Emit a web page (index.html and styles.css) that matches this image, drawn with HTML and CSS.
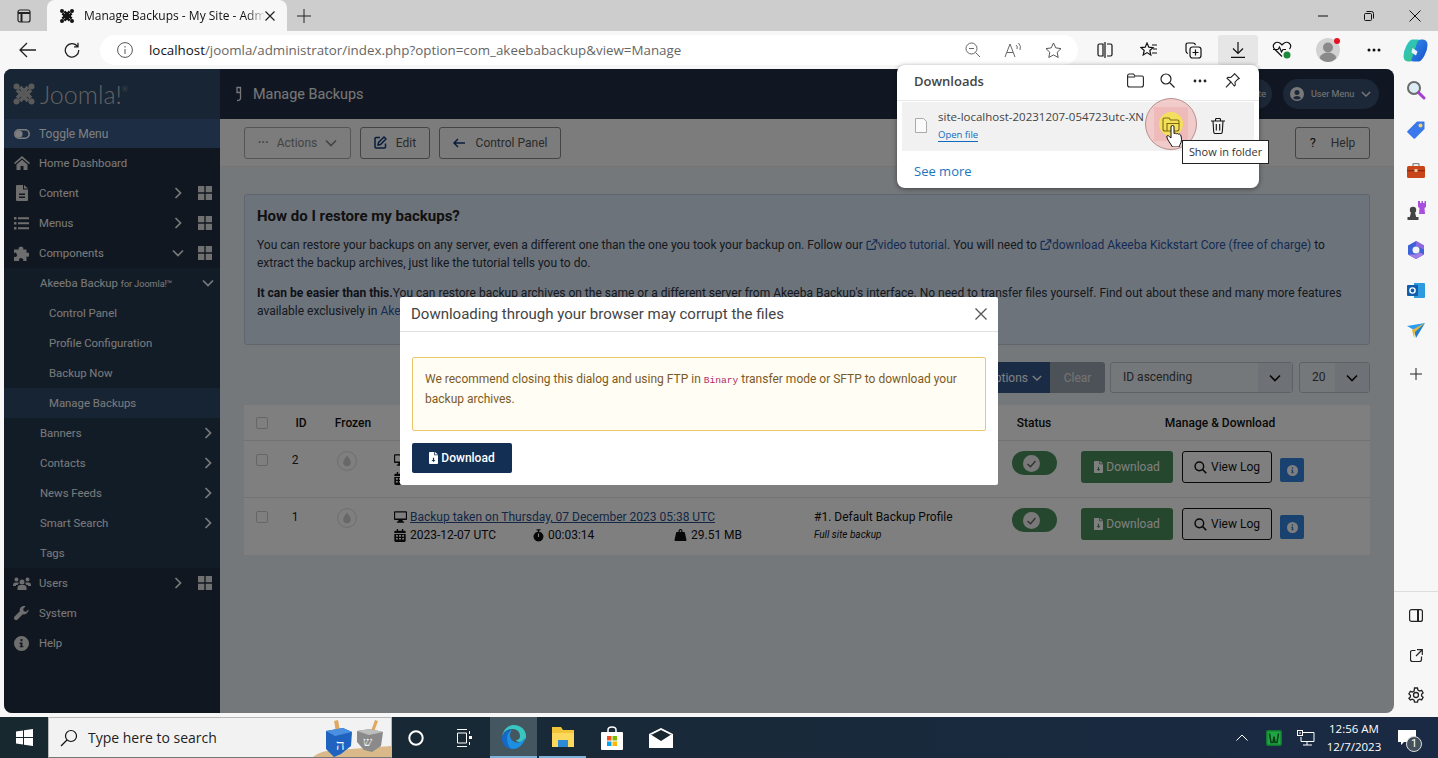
FILE: index.html
```html
<!DOCTYPE html>
<html lang="en">
<head>
    <meta charset="UTF-8">
    <title>Manage Backups - My Site - Administration</title>
    <link rel="stylesheet" href="styles.css">
</head>
<body>
    <svg class="defs" width="0" height="0">
        <defs>
            <linearGradient id="cop-a" x1="0" y1="0" x2="1" y2="1"><stop offset="0" stop-color="#27c4d8"/><stop offset="1" stop-color="#3fc46f"/></linearGradient>
            <linearGradient id="cop-b" x1="0" y1="0" x2="1" y2="1"><stop offset="0" stop-color="#2f8ff0"/><stop offset="1" stop-color="#1a4fc8"/></linearGradient>
        </defs>
        <symbol id="joomla" viewBox="0 0 24 24">
            <g fill="none" stroke="currentColor" stroke-width="3.6">
                <path d="M5 8l5 5 3 3 3 3"/><path d="M8 5l3 3 3 3 5 5"/>
                <path d="M19 8l-5 5-3 3-3 3"/><path d="M16 5l-3 3-3 3-5 5"/>
            </g>
            <g fill="currentColor"><circle cx="4.5" cy="4.5" r="3"/><circle cx="19.5" cy="4.5" r="3"/><circle cx="4.5" cy="19.5" r="3"/><circle cx="19.5" cy="19.5" r="3"/></g>
        </symbol>
        <symbol id="chev-r" viewBox="0 0 12 12"><path d="M3.5 1l5 5-5 5" fill="none" stroke="currentColor" stroke-width="1.7"/></symbol>
        <symbol id="chev-d" viewBox="0 0 12 12"><path d="M1 3.5l5 5 5-5" fill="none" stroke="currentColor" stroke-width="1.7"/></symbol>
        <symbol id="grid" viewBox="0 0 14 14"><path fill="currentColor" d="M0 0h6.3v6.3H0zM7.7 0H14v6.3H7.7zM0 7.7h6.3V14H0zM7.7 7.7H14V14H7.7z"/></symbol>
        <symbol id="file-dl" viewBox="0 0 12 16"><path fill="currentColor" fill-rule="evenodd" d="M0 1.2Q0 0 1.2 0H7v4.2h5v10.6q0 1.2-1.2 1.2H1.2Q0 16 0 14.8zM8 0l4 3.2H8zM5.2 7.5v3H3.4L6 13.2l2.6-2.7H6.8v-3z"/></symbol>
        <symbol id="search" viewBox="0 0 16 16"><circle cx="6.6" cy="6.6" r="5.3" fill="none" stroke="currentColor" stroke-width="1.8"/><path d="M10.5 10.5l4.6 4.6" stroke="currentColor" stroke-width="2"/></symbol>
        <symbol id="info" viewBox="0 0 16 16"><path fill="currentColor" fill-rule="evenodd" d="M8 0a8 8 0 1 1 0 16A8 8 0 0 1 8 0zM7 3.3v2.2h2V3.3zM6 7v1.4h1v2.4H6V12h4v-1.2H9V7z"/></symbol>
        <symbol id="desktop" viewBox="0 0 16 14"><path fill="currentColor" fill-rule="evenodd" d="M1 0h14q1 0 1 1v8.8q0 1-1 1h-4.5l.5 1.7h1.5V14H3.500v-1.500H5l.5-1.700H1q-1 0-1-1V1q0-1 1-1zm.4 1.400v7.500h13.200V1.400z"/></symbol>
        <symbol id="calendar" viewBox="0 0 14 16"><path fill="currentColor" fill-rule="evenodd" d="M3 0h1.700v2h4.600V0H11v2h1.600Q14 2 14 3.400V5H0V3.400Q0 2 1.400 2H3zM0 6h14v8.600q0 1.400-1.400 1.400H1.400Q0 16 0 14.600zm2 1.500v2h2.300v-2zm3.800 0v2h2.400v-2zm3.900 0v2H12v-2zM2 11v2h2.300v-2zm3.800 0v2h2.400v-2zm3.900 0v2H12v-2z"/></symbol>
        <symbol id="watch" viewBox="0 0 14 16"><path fill="currentColor" fill-rule="evenodd" d="M4.500 0h5v1.500H7.800v1.600a6.300 6.300 0 1 1-1.600 0V1.500H4.500zM6.300 5.500v4.300h1.400V5.500z"/></symbol>
        <symbol id="weight" viewBox="0 0 16 16"><path fill="currentColor" fill-rule="evenodd" d="M8 0a2.800 2.800 0 0 1 2.500 4h2.300q.8 0 1 .7L16 14.500q.2 1.500-1.300 1.500H1.300Q-.2 16 0 14.500L2.200 4.700q.2-.7 1-.7h2.300A2.800 2.800 0 0 1 8 0zm0 1.600a1.200 1.200 0 1 0 0 2.400 1.200 1.200 0 0 0 0-2.400z"/></symbol>
        <symbol id="drop" viewBox="0 0 20 20"><circle cx="10" cy="10" r="9.400" fill="none" stroke="currentColor" stroke-width=".8"/><path fill="currentColor" d="M10 4.500c2 3 3.800 4.800 3.800 7a3.800 3.800 0 0 1-7.600 0c0-2.200 1.800-4 3.800-7z"/></symbol>
        <symbol id="ext" viewBox="0 0 12 12"><path fill="none" stroke="currentColor" stroke-width="1.300" d="M9.500 7v3.300q0 1-1 1H1.700q-1 0-1-1V3.500q0-1 1-1H5M7 .8h4.200V5M11 1L5 7"/></symbol>
    </svg>

    <div class="tabbar">
        <div class="tab-side"><svg width="16" height="16" viewBox="0 0 16 16" fill="none" stroke="#222" stroke-width="1.200"><rect x="2" y="2" width="12" height="12" rx="2"/><path d="M2 5h12M5.500 5v9" stroke-width="2"/></svg></div>
        <div class="tab">
            <svg class="tab-icon" width="16" height="16"><use href="#joomla"/></svg>
            <span class="tab-title">Manage Backups - My Site - Adm</span>
            <svg class="tab-close" width="10" height="10" viewBox="0 0 10 10"><path d="M.5.500l9 9m0-9l-9 9" stroke="#222" stroke-width="1.200"/></svg>
        </div>
        <div class="tab-new"><svg width="14" height="14" viewBox="0 0 14 14"><path d="M7 0v14M0 7h14" stroke="#222"/></svg></div>
        <div class="win-ctrls">
            <span class="win-btn"><svg width="10" height="10" viewBox="0 0 10 10"><path d="M0 5h10" stroke="#111"/></svg></span>
            <span class="win-btn"><svg width="10" height="10" viewBox="0 0 10 10" fill="none" stroke="#111"><rect x=".5" y="2.500" width="7" height="7" rx="1"/><path d="M2.500.5h5q2 0 2 2v5"/></svg></span>
            <span class="win-btn"><svg width="12" height="12" viewBox="0 0 12 12"><path d="M.5.500l11 11m0-11l-11 11" stroke="#111"/></svg></span>
        </div>
    </div>

    <div class="toolbar">
        <span class="tool nav"><svg width="18" height="16" viewBox="0 0 18 16" fill="none" stroke="#222" stroke-width="1.300"><path d="M1 8h16M8 1L1 8l7 7"/></svg></span>
        <span class="tool nav2"><svg width="16" height="16" viewBox="0 0 16 16" fill="none" stroke="#222" stroke-width="1.300"><path d="M13.500 4.500A6.700 6.700 0 1 0 14.700 8M14 .8v4h-4"/></svg></span>
        <div class="address">
            <span class="addr-info"><svg width="16" height="16" viewBox="0 0 16 16" fill="none" stroke="#555"><circle cx="8" cy="8" r="7.400"/><path d="M8 7v5M8 4v1.500"/></svg></span>
            <span class="url"><b>localhost</b>/joomla/administrator/index.php?option=com_akeebabackup&amp;view=Manage</span>
            <span class="addr-tools">
                <span class="addr-tool"><svg width="16" height="16" viewBox="0 0 16 16" fill="none" stroke="#666"><circle cx="6.500" cy="6.500" r="5.500"/><path d="M10.500 10.500L15 15M4 6.500h5"/></svg></span>
                <span class="addr-tool"><svg width="18" height="16" viewBox="0 0 18 16" fill="none" stroke="#666"><path d="M1 15L6 2l5 13M3 10.500h6M12 3q2 1.500 1 4M14.500 1q3 3 1.500 7"/></svg></span>
                <span class="addr-tool"><svg width="17" height="16" viewBox="0 0 17 16" fill="none" stroke="#555"><path d="M8.500 1l2.300 4.900 5.200.7-3.800 3.700 1 5.200-4.700-2.600-4.700 2.600 1-5.200L1 6.600l5.200-.7z"/></svg></span>
            </span>
        </div>
        <span class="tool side-first"><svg width="16" height="16" viewBox="0 0 16 16" fill="none" stroke="#111" stroke-width="1.200"><path d="M6 2H2.500Q1 2 1 3.500v9Q1 14 2.500 14H6zM10 2h3.500Q15 2 15 3.500v9q0 1.500-1.500 1.500H10M8 0v16"/></svg></span>
        <span class="tool"><svg width="18" height="16" viewBox="0 0 18 16" fill="none" stroke="#111" stroke-width="1.200"><path d="M7 1l1.800 4.200 4.200.4-3.200 2.900 1 4.400L7 10.600l-3.800 2.300 1-4.400L1 5.600l4.200-.4zM12 3h5M13 7h4M12 11h5"/></svg></span>
        <span class="tool"><svg width="17" height="17" viewBox="0 0 17 17" fill="none" stroke="#111" stroke-width="1.200"><path d="M3 11.500Q1 11 1 9V3q0-2 2-2h5q2 0 2.500 2"/><rect x="5" y="5" width="11" height="11" rx="2.500"/><path d="M10.500 7.500v6M7.500 10.500h6"/></svg></span>
        <span class="tool tool-dl"><svg width="14" height="16" viewBox="0 0 14 16" fill="none" stroke="#111" stroke-width="1.200"><path d="M7 0v11M2 6.500L7 11.500l5-5M0 15.300h14"/></svg></span>
        <span class="tool tool-gap"><svg width="20" height="18" viewBox="0 0 20 18" fill="none" stroke="#111" stroke-width="1.200"><path d="M10 15.500L2.500 8Q0 5 2.500 2.500t6 0L10 4l1.500-1.500q3.500-2.500 6 0t0 5.500M1 8.500h5l1.500-2.500 2 5 1.500-2.500h3"/><circle cx="15" cy="14" r="3.500" fill="#1c8a3a" stroke="none"/></svg></span>
        <span class="tool tool-gap"><span class="avatar"><svg width="24" height="24" viewBox="0 0 24 24"><circle cx="12" cy="12" r="12" fill="#d2d2d2"/><circle cx="12" cy="9.500" r="5" fill="#8a8a8a"/><path d="M3.500 20q2-5.500 8.500-5.500T20.500 20Q17 24 12 24t-8.500-4z" fill="#8a8a8a"/></svg><i class="avatar-dot"></i></span></span>
        <span class="tool tool-gap"><svg width="14" height="4" viewBox="0 0 14 4" fill="#111"><circle cx="2" cy="2" r="1.500"/><circle cx="7" cy="2" r="1.500"/><circle cx="12" cy="2" r="1.500"/></svg></span>
        <span class="tool tool-copilot"><svg width="25" height="25" viewBox="0 0 25 25"><path d="M9 1.500h6q2 0 1.500 2L11 20q-1 3.500-4 3.500H5Q.5 23 .5 18q0-5 3-10.500T9 1.500z" fill="url(#cop-a)"/><path d="M16 23.500h-6q-2 0-1.500-2L14 5q1-3.500 4-3.500h2q4.500.5 4.500 5.500 0 5-3 10.500T16 23.500z" fill="url(#cop-b)"/><path d="M9.500 10l5 3.500-1.500 4-4.500-3z" fill="#e8f2ff"/></svg></span>
    </div>

    <div class="main">
        <div class="site">
            <aside class="sidebar">
                <div class="logo"><svg class="logo-mark" width="24" height="24"><use href="#joomla"/></svg><span class="logo-text">Joomla!<sup>®</sup></span></div>
                <div class="menu-toggle"><svg width="16" height="10" viewBox="0 0 16 10"><rect x=".8" y=".8" width="14.400" height="8.400" rx="4.200" fill="none" stroke="currentColor" stroke-width="1.600"/><circle cx="5" cy="5" r="3.600" fill="currentColor"/></svg><span>Toggle Menu</span></div>
                <nav class="menu">
                    <div class="m-item"><span class="m-icon"><svg width="16" height="14" viewBox="0 0 16 14"><path fill="currentColor" d="M8 0l8 7-1 1.200L8 2.300 1 8.200 0 7zM2.500 8.500L8 3.800l5.500 4.700V14H9.500v-4h-3v4h-4z"/></svg></span><span class="m-label">Home Dashboard</span></div>
                    <div class="m-item"><span class="m-icon"><svg width="12" height="16" viewBox="0 0 12 16"><path fill="currentColor" fill-rule="evenodd" d="M1 0h6v4.500h5V15q0 1-1 1H1q-1 0-1-1V1q0-1 1-1zM8 0l4 3.500H8zM3 8.500V10h6V8.500zM3 11.500V13h6v-1.500z"/></svg></span><span class="m-label">Content</span><svg class="m-chev" width="12" height="12"><use href="#chev-r"/></svg><svg class="m-grid" width="14" height="14"><use href="#grid"/></svg></div>
                    <div class="m-item"><span class="m-icon"><svg width="15" height="13" viewBox="0 0 15 13"><path fill="currentColor" d="M0 0h2.500v2.500H0zM4 .3h11v2H4zM0 5h2.500v2.500H0zM4 5.300h11v2H4zM0 10h2.500v2.500H0zM4 10.300h11v2H4z"/></svg></span><span class="m-label">Menus</span><svg class="m-chev" width="12" height="12"><use href="#chev-r"/></svg><svg class="m-grid" width="14" height="14"><use href="#grid"/></svg></div>
                    <div class="m-item"><span class="m-icon"><svg width="15" height="15" viewBox="0 0 15 15"><path fill="currentColor" d="M5 3.500Q4 2 5.500 1t3 0q1.500 1 .5 2.500h3.500V7q1.500-1 2.500 0t0 3-2.500 0V15H9q1-1.500-.5-2.500t-3 0q-1 1 0 2.500H0V10.500q1.500 1 2.500 0t0-3-2.500 0V3.500z"/></svg></span><span class="m-label">Components</span><svg class="m-chev" width="12" height="12"><use href="#chev-d"/></svg><svg class="m-grid" width="14" height="14"><use href="#grid"/></svg></div>
                    <div class="m-sub">
                        <div class="m-item m-l2"><span class="m-label">Akeeba Backup <small>for Joomla!™</small></span><svg class="m-chev2" width="12" height="12"><use href="#chev-d"/></svg></div>
                        <div class="m-item m-l3"><span class="m-label">Control Panel</span></div>
                        <div class="m-item m-l3"><span class="m-label">Profile Configuration</span></div>
                        <div class="m-item m-l3"><span class="m-label">Backup Now</span></div>
                        <div class="m-item m-l3 m-active"><span class="m-label">Manage Backups</span></div>
                        <div class="m-item m-l2"><span class="m-label">Banners</span><svg class="m-chev2" width="12" height="12"><use href="#chev-r"/></svg></div>
                        <div class="m-item m-l2"><span class="m-label">Contacts</span><svg class="m-chev2" width="12" height="12"><use href="#chev-r"/></svg></div>
                        <div class="m-item m-l2"><span class="m-label">News Feeds</span><svg class="m-chev2" width="12" height="12"><use href="#chev-r"/></svg></div>
                        <div class="m-item m-l2"><span class="m-label">Smart Search</span><svg class="m-chev2" width="12" height="12"><use href="#chev-r"/></svg></div>
                        <div class="m-item m-l2"><span class="m-label">Tags</span></div>
                    </div>
                    <div class="m-item"><span class="m-icon"><svg width="18" height="14" viewBox="0 0 18 14"><path fill="currentColor" d="M9 3.500a2.500 2.500 0 1 1 0 5 2.500 2.500 0 0 1 0-5zM3.500 1.500a2 2 0 1 1 0 4 2 2 0 0 1 0-4zM14.500 1.500a2 2 0 1 1 0 4 2 2 0 0 1 0-4zM4.500 14v-2q0-3 3-3h3q3 0 3 3v2zM0 9.500Q0 6.500 2.500 6.500H5q.5 0 1 .5-1 1-1.500 2H3v1H0zM18 9.500q0-3-2.500-3H13q-.5 0-1 .5 1 1 1.500 2H15v1h3z"/></svg></span><span class="m-label">Users</span><svg class="m-chev" width="12" height="12"><use href="#chev-r"/></svg><svg class="m-grid" width="14" height="14"><use href="#grid"/></svg></div>
                    <div class="m-item"><span class="m-icon"><svg width="15" height="15" viewBox="0 0 15 15"><path fill="currentColor" d="M14.700 3.300L12.200 5.800l-2.500-.5-.5-2.500L11.700.3q-3-1-4.900 1-1.500 1.500-1 4L.6 10.500q-1.300 1.500 0 3 1.500 1.300 3 0l5.200-5.200q2.500.5 4-1 2-2 1.900-4z"/></svg></span><span class="m-label">System</span></div>
                    <div class="m-item"><span class="m-icon"><svg width="15" height="15"><use href="#info"/></svg></span><span class="m-label">Help</span></div>
                </nav>
            </aside>

            <div class="content">
                <header class="top-head">
                    <span class="head-icon"><svg width="10" height="16" viewBox="0 0 10 16" fill="none" stroke="currentColor" stroke-width="1.300"><path d="M6.500 1.500H3v5h3.500zM6.500 1.500v10.500q0 2.500-3.500 2.500"/></svg></span>
                    <span class="head-title">Manage Backups</span>
                    <span class="head-right">
                        <svg class="head-j" width="10" height="10"><use href="#joomla"/></svg>
                        <span class="pill pill-site">Visit Site</span>
                        <span class="pill pill-user"><svg width="14" height="14" viewBox="0 0 14 14"><path fill="currentColor" fill-rule="evenodd" d="M7 0a7 7 0 1 1 0 14A7 7 0 0 1 7 0zm0 3a2.500 2.500 0 1 0 0 5 2.500 2.500 0 0 0 0-5zM3 11q1.500 1.500 4 1.500t4-1.500Q10 9 7 9t-4 2z"/></svg><span class="pill-text">User Menu</span><svg width="10" height="10"><use href="#chev-d"/></svg></span>
                    </span>
                </header>

                <div class="subhead">
                    <button class="btn btn-muted"><span class="dots">···</span>Actions<svg width="12" height="12"><use href="#chev-d"/></svg></button>
                    <button class="btn btn-line btn-edit"><svg width="13" height="13" viewBox="0 0 13 13" fill="none" stroke="#0d3a7a" stroke-width="1.500"><path d="M11.500 7.500v3.500q0 1-1 1H2q-1 0-1-1V2.500q0-1 1-1h4M4.500 6.500L10 1l2 2-5.500 5.500-2.500.5z"/></svg>Edit</button>
                    <button class="btn btn-line btn-cp"><svg width="12" height="10" viewBox="0 0 12 10" fill="none" stroke="#0d3a7a" stroke-width="1.500"><path d="M12 5H1M5 1L1 5l4 4"/></svg>Control Panel</button>
                    <button class="btn btn-line btn-help"><b>?</b>Help</button>
                </div>

                <div class="page-body">
                    <section class="restore-box">
                        <h4>How do I restore my backups?</h4>
                        <p>You can restore your backups on any server, even a different one than the one you took your backup on. Follow our <a><svg width="12" height="11"><use href="#ext"/></svg>video tutorial</a>. You will need to <a><svg width="12" height="11"><use href="#ext"/></svg>download Akeeba Kickstart Core (free of charge)</a> to extract the backup archives, just like the tutorial tells you to do.</p>
                        <p><strong>It can be easier than this.</strong>You can restore backup archives on the same or a different server from Akeeba Backup's interface. No need to transfer files yourself. Find out about these and many more features available exclusively in <a>Akeeba Backup Professional</a>.</p>
                    </section>

                    <div class="filters">
                        <span class="btn-group"><span class="f-opts">Filter Options<svg width="10" height="10"><use href="#chev-d"/></svg></span><span class="f-clear">Clear</span></span>
                        <span class="select select-order">ID ascending<i class="select-arrow"><svg width="12" height="12"><use href="#chev-d"/></svg></i></span>
                        <span class="select select-limit">20<i class="select-arrow"><svg width="12" height="12"><use href="#chev-d"/></svg></i></span>
                    </div>

                    <div class="tbl">
                        <div class="tbl-row tbl-head">
                            <span class="c-center"><i class="check"></i></span>
                            <span class="c-center">ID</span>
                            <span class="c-center">Frozen</span>
                            <span></span>
                            <span></span>
                            <span class="c-center">Status</span>
                            <span class="c-center">Manage &amp; Download</span>
                        </div>
                        <div class="tbl-row">
                            <span class="c-center"><i class="check"></i></span>
                            <span class="c-center c-id">2</span>
                            <span class="c-center"><svg class="frozen" width="20" height="20"><use href="#drop"/></svg></span>
                            <div class="c-desc">
                                <div class="b-title"><svg width="13" height="12"><use href="#desktop"/></svg></div>
                                <div class="b-meta"><span><svg width="12" height="13"><use href="#calendar"/></svg></span></div>
                            </div>
                            <div class="c-profile"></div>
                            <span class="c-center"><i class="toggle"><svg width="19" height="19" viewBox="0 0 19 19"><circle cx="9.500" cy="9.500" r="8.500" fill="#f2f2f2"/><path d="M5.500 10l3 2.800 5-5.800" fill="none" stroke="#666" stroke-width="1.400"/></svg></i></span>
                            <div class="c-manage"><span class="btn-green"><svg width="9" height="12"><use href="#file-dl"/></svg>Download</span><span class="btn-log"><svg width="13" height="13"><use href="#search"/></svg>View Log</span><span class="btn-info"><svg width="11" height="11"><use href="#info"/></svg></span></div>
                        </div>
                        <div class="tbl-row">
                            <span class="c-center"><i class="check"></i></span>
                            <span class="c-center c-id">1</span>
                            <span class="c-center"><svg class="frozen" width="20" height="20"><use href="#drop"/></svg></span>
                            <div class="c-desc">
                                <div class="b-title"><svg width="13" height="12"><use href="#desktop"/></svg><a>Backup taken on Thursday, 07 December 2023 05:38 UTC</a></div>
                                <div class="b-meta"><span><svg width="12" height="13"><use href="#calendar"/></svg>2023-12-07 UTC</span><span><svg width="11" height="13"><use href="#watch"/></svg>00:03:14</span><span><svg width="13" height="12"><use href="#weight"/></svg>29.51 MB</span></div>
                            </div>
                            <div class="c-profile">#1. Default Backup Profile<em>Full site backup</em></div>
                            <span class="c-center"><i class="toggle"><svg width="19" height="19" viewBox="0 0 19 19"><circle cx="9.500" cy="9.500" r="8.500" fill="#f2f2f2"/><path d="M5.500 10l3 2.800 5-5.800" fill="none" stroke="#666" stroke-width="1.400"/></svg></i></span>
                            <div class="c-manage"><span class="btn-green"><svg width="9" height="12"><use href="#file-dl"/></svg>Download</span><span class="btn-log"><svg width="13" height="13"><use href="#search"/></svg>View Log</span><span class="btn-info"><svg width="11" height="11"><use href="#info"/></svg></span></div>
                        </div>
                    </div>
                </div>
            </div>

            <div class="backdrop"></div>
            <div class="modal">
                <div class="modal-head"><span>Downloading through your browser may corrupt the files</span><svg width="12" height="12" viewBox="0 0 12 12"><path d="M.5.500l11 11m0-11l-11 11" stroke="#555" stroke-width="1.300"/></svg></div>
                <div class="modal-body">
                    <div class="alert">We recommend closing this dialog and using FTP in <code>Binary</code> transfer mode or SFTP to download your backup archives.</div>
                    <span class="btn-dl"><svg width="9" height="12"><use href="#file-dl"/></svg>Download</span>
                </div>
            </div>
        </div>

        <aside class="edgebar">
            <span class="edge-item"><svg width="20" height="20" viewBox="0 0 20 20"><circle cx="8" cy="8" r="6" fill="#dcecf5" stroke="#6a6a6a" stroke-width="2"/><path d="M12.500 12.500L18 18" stroke="#a53fcf" stroke-width="3" stroke-linecap="round"/></svg></span>
            <span class="edge-item"><svg width="18" height="18" viewBox="0 0 18 18"><path d="M10 .5h7q.5 0 .5.500v7L8 17.500q-.7.7-1.400 0L.5 11.400q-.7-.7 0-1.400z" fill="#3a78ec"/><circle cx="13.500" cy="4.500" r="2" fill="#f3d36a"/></svg></span>
            <span class="edge-item"><svg width="18" height="15" viewBox="0 0 18 15"><path d="M6 3V1.500Q6 .5 7 .5h4q1 0 1 1V3" fill="none" stroke="#8a8a8a" stroke-width="1.300"/><rect y="3" width="18" height="12" rx="1.500" fill="#c8451a"/><rect y="7" width="18" height="1.300" fill="#8f2d0e"/><rect x="7.500" y="6" width="3" height="3" fill="#f0c8a0"/></svg></span>
            <span class="edge-item"><svg width="19" height="19" viewBox="0 0 19 19"><circle cx="6" cy="9" r="3.200" fill="#444"/><path d="M4 11.500h4l1.200 4.500H2.800zM.5 16h11v3H.5z" fill="#444"/><path d="M11 0h2v2h1.500V0h1.500v2h1.500V0h1.500v6l-1.500 1 .5 6h-6l.5-6L11 6z" fill="#a84fe0"/></svg></span>
            <span class="edge-item"><svg width="18" height="18" viewBox="0 0 18 18"><path d="M9 0l8 4.500v9L9 18l-8-4.500v-9z" fill="#3d63d8"/><path d="M9 0l8 4.500v4L9 5z" fill="#8e6ae0"/><path d="M1 13.500l8 4.500 8-4.500-4-2-4 2z" fill="#a77de8"/><circle cx="9" cy="9" r="3.500" fill="#f4f4f4"/></svg></span>
            <span class="edge-item"><svg width="18" height="17" viewBox="0 0 18 17"><path d="M7 1h10q1 0 1 1v13q0 1-1 1H7z" fill="#2e9ae0"/><rect y="3" width="11" height="11" rx="1" fill="#0f5eae"/><circle cx="5.500" cy="8.500" r="2.600" fill="none" stroke="#fff" stroke-width="1.400"/></svg></span>
            <span class="edge-item"><svg width="18" height="15" viewBox="0 0 18 15"><path d="M0 3l18-3-11 7z" fill="#2a9df0"/><path d="M18 0L7 7l2 8z" fill="#1d7fd0"/><path d="M18 0L5 7l2 8 1-6z" fill="#e8b43a"/></svg></span>
            <span class="edge-item edge-plus"><svg width="12" height="12" viewBox="0 0 12 12"><path d="M6 0v12M0 6h12" stroke="#222"/></svg></span>
            <div class="edge-bottom">
                <span class="edge-item"><svg width="14" height="13" viewBox="0 0 14 13" fill="none" stroke="#222" stroke-width="1.200"><rect x=".6" y=".6" width="12.800" height="11.800" rx="2"/><path d="M9 .6v11.800" stroke-width="2"/></svg></span>
                <span class="edge-item"><svg width="13" height="13" viewBox="0 0 13 13" fill="none" stroke="#222" stroke-width="1.200"><path d="M5.500 1.500H2.500q-2 0-2 2v7q0 2 2 2h7q2 0 2-2V7.500M7 .7h5.300V6M12 1L6 7"/></svg></span>
                <span class="edge-item"><svg width="16" height="16" viewBox="0 0 16 16" fill="none" stroke="#222" stroke-width="1.300"><circle cx="8" cy="8" r="2.500"/><path d="M6.500 1h3l.4 2 1.800 1 1.900-.7 1.500 2.600-1.500 1.300v1.800l1.500 1.300-1.500 2.600-1.900-.7-1.800 1-.4 2h-3l-.4-2-1.800-1-1.900.7L.9 11.300l1.500-1.300V8.200L.9 6.900l1.500-2.600 1.900.7 1.800-1z"/></svg></span>
            </div>
        </aside>
    </div>

    <div class="taskbar">
        <span class="tb-start"><svg width="17" height="17" viewBox="0 0 17 17" fill="#fff"><path d="M0 2.500l7-1v6.500H0zM8 1.300L17 0v8H8zM0 9h7v6.500l-7-1zM8 9h9v8l-9-1.300z"/></svg></span>
        <div class="tb-search">
            <svg width="18" height="18" viewBox="0 0 18 18" fill="none" stroke="#111" stroke-width="1.200"><circle cx="11" cy="7" r="5.500"/><path d="M7 11l-6 6"/></svg>
            <span>Type here to search</span>
            <svg class="tb-doodle" width="78" height="39" viewBox="0 0 78 39">
                <path d="M0 39q8-7 24-7l54-4v11z" fill="#d9b98a"/>
                <path d="M21 3l4-1 2 11-4 1z" fill="#e0a85e"/>
                <path d="M13 13l17-3 9 4-1 14-10 8-7 3-8-8z" fill="#1f62c0"/>
                <path d="M13 13l17-3 9 4-17 4z" fill="#4a8fe0"/>
                <text x="23" y="32" font-size="15" font-family="Liberation Serif, serif" fill="#fff">ה</text>
                <path d="M62 2l3 1-4 11-3-1z" fill="#e0a85e"/>
                <path d="M44 13l13-2 13 3-2 14-9 6-8-2-7-8z" fill="#8a8a8a"/>
                <path d="M44 13l13-2 13 3-14 3z" fill="#bdbdbd"/>
                <text x="50" y="28" font-size="13" font-family="Liberation Serif, serif" fill="#eee">ש</text>
            </svg>
        </div>
        <span class="tb-item"><svg width="16" height="16" viewBox="0 0 16 16"><circle cx="8" cy="8" r="6.700" fill="none" stroke="#fff" stroke-width="2"/></svg></span>
        <span class="tb-item"><svg width="18" height="18" viewBox="0 0 18 18" fill="none" stroke="#fff"><path d="M2 .5h10M2 17.500h10M2.500 4h9v10h-9z"/><path d="M14.500 2v3M14.500 13v3"/><rect x="14" y="7" width="3" height="3" fill="#fff" stroke="none"/></svg></span>
        <span class="tb-app tb-edge"><svg width="24" height="24" viewBox="0 0 24 24"><path d="M12 0c7 0 12 5 12 11 0 4-3 6-6 6-2 0-4-1-4-2 3 0 4-2 4-4 0-4-3-7-7-7-6 0-11 4-11 10C0 6 5 0 12 0z" fill="#3ac6c0"/><path d="M0 14c0-6 5-10 10-10-4 2-5 5-5 9 0 6 5 11 11 11-2 0-4 0-6 0-6 0-10-5-10-10z" fill="#1568c8"/><path d="M5 13c0-4 2-7 5-8-1 1-2 3-2 5 0 5 5 9 10 7 2-1 3-2 5-4-1 6-6 11-12 11C7 24 5 18 5 13z" fill="#1d8fe0"/></svg></span>
        <span class="tb-app tb-open"><svg width="24" height="22" viewBox="0 0 24 22"><path d="M1 1h9l2 3h11v17H1z" fill="#f2c43a"/><path d="M1 7h22v14H1z" fill="#fbd95c"/><rect x="7" y="14" width="10" height="7" fill="#2c8bd4"/></svg></span>
        <span class="tb-app"><svg width="22" height="24" viewBox="0 0 22 24"><path d="M7 6V4q0-3 4-3t4 3v2" fill="none" stroke="#fff" stroke-width="1.500"/><rect y="6" width="22" height="18" rx="1" fill="#fff"/><path d="M6 10h4.500v4.500H6z" fill="#f25022"/><path d="M11.500 10H16v4.500h-4.500z" fill="#7fba00"/><path d="M6 15.500h4.500V20H6z" fill="#00a4ef"/><path d="M11.500 15.500H16V20h-4.500z" fill="#ffb900"/></svg></span>
        <span class="tb-app"><svg width="24" height="20" viewBox="0 0 24 20"><path d="M0 6l12-6 12 6v14H0z" fill="#fff"/><path d="M1 6l11 7 11-7-11 3z" fill="#17262f"/><path d="M3 6.500l9-4.500 9 4.500-9 5.500z" fill="#17262f"/></svg></span>
        <div class="tray">
            <span class="tray-item"><svg width="12" height="7" viewBox="0 0 12 7" fill="none" stroke="#fff"><path d="M.5 6.500L6 1l5.500 5.500"/></svg></span>
            <span class="tray-item"><svg width="16" height="16" viewBox="0 0 16 16"><rect width="16" height="16" rx="2" fill="#0f7a2e"/><rect x="1.500" y="1.500" width="13" height="13" fill="#1fa544"/><path d="M3.500 3.500l1.500 9h2l1-6 1 6h2l1.500-9" fill="none" stroke="#0a3d17" stroke-width="1.500"/></svg></span>
            <span class="tray-item"><svg width="18" height="16" viewBox="0 0 18 16" fill="none" stroke="#fff"><path d="M5 2.500h12v9H4V7M10 11.500V15M6 15h9"/><rect x=".5" y=".5" width="5" height="5" fill="#1a2a40"/><path d="M2 3h2" /></svg></span>
            <span class="clock"><span>12:56 AM</span><span>12/7/2023</span></span>
            <span class="notif"><svg width="18" height="16" viewBox="0 0 18 16" fill="#fff"><path d="M0 0h18v12H6l-3 3v-3H0z"/></svg><i class="notif-num">1</i></span>
        </div>
    </div>

    <div class="dl-panel">
        <div class="dl-head">
            <span class="dl-title">Downloads</span>
            <span class="dl-tool"><svg width="17" height="15" viewBox="0 0 17 15" fill="none" stroke="#222" stroke-width="1.100"><path d="M.6 3Q.6 1 2.500 1h4L8 3h7q1.400 0 1.400 1.500V12q0 2-2 2H2.600q-2 0-2-2zM.6 4h7.500"/></svg></span>
            <span class="dl-tool"><svg width="15" height="15" viewBox="0 0 15 15" fill="none" stroke="#222" stroke-width="1.200"><circle cx="6" cy="6" r="5"/><path d="M10 10l4.500 4.500"/></svg></span>
            <span class="dl-tool"><svg width="14" height="4" viewBox="0 0 14 4" fill="#222"><circle cx="2" cy="2" r="1.400"/><circle cx="7" cy="2" r="1.400"/><circle cx="12" cy="2" r="1.400"/></svg></span>
            <span class="dl-tool"><svg width="15" height="15" viewBox="0 0 15 15" fill="none" stroke="#222" stroke-width="1.100"><path d="M9.500.7l4.800 4.800-1.500.7-2.800 3 .3 2.800-1 1L6 9 1 14.300 6 9 2 5.200l1-1 2.800.3 3-2.800z"/></svg></span>
        </div>
        <div class="dl-row">
            <svg class="dl-file" width="12" height="15" viewBox="0 0 12 15" fill="#fafafa" stroke="#aaa"><path d="M.5.500h8l3 3v11H.5z"/></svg>
            <div class="dl-info">
                <span class="dl-name">site-localhost-20231207-054723utc-XN</span>
                <a class="dl-open">Open file</a>
            </div>
            <svg class="dl-trash" width="14" height="16" viewBox="0 0 14 16" fill="none" stroke="#111" stroke-width="1.100"><path d="M0 3h14M4.500 3V1.500q0-1 1-1h3q1 0 1 1V3M2 3l.7 11q.1 1.500 1.500 1.500h5.600q1.400 0 1.500-1.500L12 3M5.300 6v6.500M8.700 6v6.500"/></svg>
        </div>
        <a class="dl-more">See more</a>
    </div>

    <div class="spot">
        <i class="spot-square"></i>
        <i class="spot-yellow"></i>
        <svg class="spot-folder" width="18" height="15" viewBox="0 0 18 15" fill="none" stroke="#7a6a10" stroke-width="1.100"><path d="M1 2.500Q1 1 2.500 1H7l1.500 2h7Q17 3 17 4.500V12q0 2-2 2H3q-2 0-2-2zM5 14V6.500h12"/></svg>
        <svg class="spot-hand" width="17" height="22" viewBox="0 0 17 22"><path d="M5 2q0-1.500 1.500-1.500T8 2v6.500l1-.3q1-.2 1.500.5 1.300-.5 2 .5 1.400-.5 2.200.8.800 2 .8 4.500 0 3-1.500 5-.5 1.500-1 2.500H6.500L2 15 .8 12q-.3-1.300 1-1.300 1 0 1.700 1L5 13z" fill="#fff" stroke="#111"/></svg>
    </div>
    <div class="tooltip">Show in folder</div>
</body>
</html>
```

FILE: styles.css
```css
* {
    box-sizing: border-box;
}

html, body {
    margin: 0;
    height: 758px;
    overflow: hidden;
}

body {
    position: relative;
    font-family: Roboto, "Liberation Sans", sans-serif;
    font-size: 12px;
    background-color: #f7f7f7;
    color: #222;
}

.defs {
    position: absolute;
}

svg {
    display: block;
    flex: none;
}

/* browser chrome */
.tabbar {
    display: flex;
    align-items: stretch;
    height: 31px;
    background-color: #cdcdcd;
    font-family: "Open Sans", sans-serif;
}

.tab-side {
    display: flex;
    align-items: center;
    justify-content: center;
    width: 47px;
}

.tab {
    display: flex;
    align-items: center;
    width: 240px;
    padding: 0 12px;
    background-color: #f7f7f7;
    border-radius: 8px 8px 0 0;
    color: #111;
}

.tab-title {
    width: 182px;
    margin-left: 9px;
    overflow: hidden;
    white-space: nowrap;
    font-size: 12px;
    -webkit-mask-image: linear-gradient(to right, #000 90%, transparent);
    mask-image: linear-gradient(to right, #000 90%, transparent);
}

.tab-new {
    display: flex;
    align-items: center;
    justify-content: center;
    width: 34px;
}

.win-ctrls {
    display: flex;
    margin-left: auto;
}

.win-btn {
    display: flex;
    align-items: center;
    justify-content: center;
    width: 46px;
}

.toolbar {
    display: flex;
    align-items: center;
    height: 38px;
    padding-left: 8px;
    background-color: #f7f7f7;
    font-family: "Open Sans", sans-serif;
}

.tool {
    display: flex;
    align-items: center;
    justify-content: center;
    width: 44px;
    height: 30px;
}

.nav {
    width: 40px;
}

.nav2 {
    width: 48px;
}

.address {
    display: flex;
    align-items: center;
    width: 978px;
    height: 30px;
    margin-left: 4px;
    background-color: #fff;
    border-radius: 15px;
}

.addr-info {
    display: flex;
    justify-content: center;
    width: 49px;
}

.url {
    font-size: 13.350px;
    color: #666;
    white-space: nowrap;
}

.url b {
    font-weight: 400;
    color: #111;
}

.addr-tools {
    display: flex;
    margin-left: auto;
    padding-right: 5px;
}

.addr-tool {
    display: flex;
    justify-content: center;
    width: 40px;
}

.side-first {
    margin-left: 5px;
}

.tool-dl {
    width: 40px;
    margin-left: 3px;
    background-color: #e6e6e6;
    border-radius: 3px;
}

.tool-gap {
    margin-left: 2px;
}

.tool-copilot {
    width: 38px;
}

.avatar {
    position: relative;
}

.avatar-dot {
    position: absolute;
    top: 0;
    right: 0;
    width: 6px;
    height: 6px;
    background-color: #e81123;
    border-radius: 50%;
}

/* joomla page */
.main {
    display: flex;
    height: 648px;
    padding-left: 4px;
}

.site {
    position: relative;
    display: flex;
    flex: 1;
    height: 644px;
    overflow: hidden;
    border-radius: 8px;
    background-color: #ebf1f7;
    color: #1d2a3a;
}

.sidebar {
    display: flex;
    flex-direction: column;
    width: 216px;
    background-color: #222f42;
    font-size: 11.350px;
    color: #fff;
}

.logo {
    display: flex;
    align-items: center;
    height: 50px;
    padding-left: 8px;
    background-color: #2f4a69;
    color: #b4b4b4;
}

.logo-text {
    margin-left: 4px;
    font-family: Lato, sans-serif;
    font-size: 25px;
    font-weight: 300;
    color: #c4c4c4;
}

.logo-text sup {
    font-size: 7px;
    vertical-align: 12px;
    line-height: 0;
}

.menu-toggle {
    display: flex;
    align-items: center;
    gap: 9px;
    height: 29px;
    padding-left: 10px;
    background-color: #385a88;
    font-size: 12px;
    color: #fff;
}

.m-item {
    position: relative;
    display: flex;
    align-items: center;
    height: 30px;
    color: #f4f4f4;
}

.m-icon {
    display: flex;
    justify-content: center;
    width: 35px;
    color: #dcdcdc;
}

.m-chev {
    position: absolute;
    left: 168px;
    top: 9px;
}

.m-grid {
    position: absolute;
    left: 194px;
    top: 8px;
    color: #e0e0e0;
}

.m-chev2 {
    position: absolute;
    left: 198px;
    top: 9px;
}

.m-sub {
    background-color: #25384f;
}

.m-l2 {
    padding-left: 36px;
}

.m-l2 small {
    font-size: 9px;
}

.m-l3 {
    padding-left: 45px;
}

.m-active {
    background-color: #2f4866;
}

.content {
    display: flex;
    flex-direction: column;
    flex: 1;
    min-width: 0;
}

.top-head {
    display: flex;
    align-items: center;
    height: 50px;
    padding-left: 14px;
    background-color: #202f44;
    color: #f0f0f0;
}

.head-title {
    margin-left: 9px;
    font-size: 14.400px;
}

.head-right {
    display: flex;
    align-items: center;
    margin-left: auto;
    padding-right: 15px;
}

.head-j {
    margin-right: 260px;
    color: #888;
}

.pill {
    display: flex;
    align-items: center;
    height: 30px;
    border-radius: 15px;
    background-color: #385070;
    font-size: 9px;
    color: #f0f0f0;
    white-space: nowrap;
}

.pill-site {
    padding: 0 6px 0 10px;
}

.pill-user {
    gap: 7px;
    width: 96px;
    margin-left: 11px;
    padding: 0 7px;
}

.subhead {
    display: flex;
    align-items: center;
    gap: 9px;
    height: 48px;
    padding: 0 24px;
    background-color: #f8f8f8;
    border-bottom: 1px solid #e8e8e8;
}

.btn {
    display: flex;
    align-items: center;
    height: 32px;
    padding: 0;
    border: 1px solid #888;
    border-radius: 3px;
    background: transparent;
    font-family: inherit;
    font-size: 12px;
    color: #555;
}

.btn-muted {
    justify-content: center;
    gap: 8px;
    width: 107px;
    border-color: #aaa;
    color: #888;
}

.dots {
    font-weight: 700;
}

.btn-edit {
    justify-content: center;
    gap: 9px;
    width: 70px;
}

.btn-cp {
    justify-content: center;
    gap: 11px;
    width: 122px;
}

.btn-help {
    justify-content: center;
    gap: 15px;
    width: 75px;
    margin-left: auto;
}

.btn-help b {
    font-size: 13px;
    font-weight: 400;
    color: #222;
}

.page-body {
    padding: 27px 24px 0;
}

.restore-box {
    height: 151px;
    padding: 12px 12px 0;
    background-color: #dbe6f5;
    border: 1px solid #bccadb;
    border-radius: 3px;
    color: #2a3340;
    line-height: 18px;
}

.restore-box h4 {
    margin: 0 0 11px;
    font-size: 15px;
    font-weight: 700;
    line-height: 18px;
    color: #222;
}

.restore-box p {
    margin: 0 0 12px;
}

.restore-box a {
    color: #2a58a8;
}

.restore-box a svg {
    display: inline;
    vertical-align: -1px;
}

.restore-box strong {
    color: #1d2530;
}

.filters {
    display: flex;
    justify-content: flex-end;
    gap: 5px;
    height: 31px;
    margin-top: 17px;
}

.btn-group {
    display: flex;
}

.f-opts {
    display: flex;
    align-items: center;
    gap: 4px;
    padding: 0 8px;
    background-color: #34568c;
    border-radius: 3px 0 0 3px;
    color: #fff;
}

.f-clear {
    display: flex;
    align-items: center;
    justify-content: center;
    width: 55px;
    background-color: #9ba4b0;
    border-radius: 0 3px 3px 0;
    color: #e8e8e8;
}

.select {
    position: relative;
    display: flex;
    align-items: center;
    padding: 0 0 2px 12px;
    background-color: #eaf0f6;
    border: 1px solid #bbc4ce;
    border-radius: 3px;
    color: #444;
}

.select-order {
    width: 183px;
    margin-right: 1px;
}

.select-limit {
    width: 71px;
}

.select-arrow {
    position: absolute;
    top: 0;
    right: 0;
    display: flex;
    align-items: center;
    justify-content: center;
    width: 34px;
    height: 100%;
    background-color: #dde3ea;
    color: #111;
}

.tbl {
    margin-top: 12px;
    background-color: #fff;
}

.tbl-row {
    display: grid;
    grid-template-columns: 36px 42px 62px 430px 184px 72px 300px;
    height: 57px;
    padding-top: 10px;
    border-bottom: 1px solid #e4e4e4;
    line-height: 18px;
    color: #111;
}

.tbl-row:last-child {
    border-bottom: 0;
}

.tbl-head {
    align-items: center;
    height: 36px;
    padding-top: 0;
    font-weight: 500;
}

.c-center {
    display: flex;
    justify-content: center;
}

.c-id {
    margin-right: 12px;
    color: #222;
}

.check {
    width: 12px;
    height: 12px;
    margin-top: 3px;
    background-color: #fff;
    border: 1px solid #ccc;
    border-radius: 2px;
}

.tbl-head .check {
    margin-top: 0;
}

.frozen {
    margin-right: 12px;
    color: #d0d0d0;
}

.c-desc {
    padding-left: 10px;
}

.b-title {
    display: flex;
    align-items: center;
    gap: 3px;
    height: 18px;
}

.b-title a {
    color: #2a4f8a;
    text-decoration: underline;
}

.b-meta {
    display: grid;
    grid-template-columns: 139px 141px 120px;
    height: 18px;
}

.b-meta span {
    display: flex;
    align-items: center;
    gap: 4px;
}

.c-profile em {
    display: block;
    font-size: 10px;
}

.toggle {
    display: flex;
    align-items: center;
    width: 45px;
    height: 24px;
    padding-left: 10px;
    background-color: #4a8f5b;
    border-radius: 12px;
}

.c-manage {
    display: flex;
    padding-left: 11px;
}

.btn-green {
    display: flex;
    align-items: center;
    justify-content: center;
    gap: 3px;
    width: 92px;
    height: 32px;
    background-color: #4a8f5b;
    border-radius: 3px;
    color: #fff;
}

.btn-log {
    display: flex;
    align-items: center;
    justify-content: center;
    gap: 4px;
    width: 90px;
    height: 32px;
    margin-left: 9px;
    border: 1px solid #111;
    border-radius: 3px;
}

.btn-info {
    display: flex;
    align-items: center;
    justify-content: center;
    width: 24px;
    height: 24px;
    margin: 7px 0 0 8px;
    background-color: #3585e0;
    border-radius: 2px;
    color: #fff;
}

.backdrop {
    position: absolute;
    inset: 0;
    background-color: rgba(0, 0, 0, .5);
}

.modal {
    position: absolute;
    left: 396px;
    top: 228px;
    width: 598px;
    height: 188px;
    background-color: #fff;
    border-radius: 2px;
}

.modal-head {
    display: flex;
    align-items: center;
    justify-content: space-between;
    height: 35px;
    padding: 0 11px;
    border-bottom: 1px solid #e0e0e0;
    font-size: 15px;
    color: #444;
}

.modal-body {
    padding: 25px 12px 0;
}

.alert {
    height: 74px;
    padding: 12px;
    background-color: #fffdf4;
    border: 1px solid #eac768;
    border-radius: 2px;
    line-height: 18px;
    color: #7d5a1e;
}

.alert code {
    font-family: "Liberation Mono", monospace;
    font-size: 9.600px;
    color: #b02a6a;
}

.btn-dl {
    display: flex;
    align-items: center;
    justify-content: center;
    gap: 3px;
    width: 100px;
    height: 30px;
    margin-top: 12px;
    padding-bottom: 1px;
    background-color: #132f53;
    border-radius: 2px;
    color: #fff;
    font-weight: 500;
}

/* edge side panel */
.edgebar {
    display: flex;
    flex-direction: column;
    width: 44px;
    padding: 1px 0 2px;
    background-color: #f7f7f7;
}

.edge-item {
    display: flex;
    align-items: center;
    justify-content: center;
    height: 40px;
}

.edge-plus {
    margin-top: 4px;
}

.edge-bottom {
    margin-top: auto;
    padding-top: 3px;
    border-top: 1px solid #ddd;
}

/* windows taskbar */
.taskbar {
    display: flex;
    align-items: stretch;
    height: 41px;
    background: linear-gradient(to right, #17282f, #1a2a44);
    color: #fff;
}

.tb-start {
    display: flex;
    align-items: center;
    justify-content: center;
    width: 48px;
}

.tb-search {
    position: relative;
    display: flex;
    align-items: center;
    gap: 10px;
    width: 344px;
    padding-left: 11px;
    background-color: #f2f2f2;
    border: 1px solid #b8b8b8;
    border-bottom-color: #777;
    overflow: hidden;
    font-family: "Open Sans", sans-serif;
    font-size: 14px;
    color: #222;
}

.tb-doodle {
    position: absolute;
    right: 0;
    bottom: 0;
}

.tb-item {
    display: flex;
    align-items: center;
    justify-content: center;
    width: 48px;
}

.tb-app {
    display: flex;
    align-items: center;
    justify-content: center;
    width: 47px;
    margin-right: 2px;
}

.tb-edge {
    margin-left: 2px;
    background-color: #44565f;
    border-bottom: 2px solid #7fb2d8;
}

.tb-open {
    border-bottom: 2px solid #7fb2d8;
}

.tray {
    display: flex;
    align-items: center;
    margin-left: auto;
    padding-right: 10px;
}

.tray-item {
    display: flex;
    justify-content: center;
    width: 32px;
}

.clock {
    display: flex;
    flex-direction: column;
    align-items: center;
    width: 64px;
    font-family: "Open Sans", sans-serif;
    font-size: 11.500px;
    line-height: 18px;
}

.notif {
    position: relative;
    display: flex;
    justify-content: center;
    width: 42px;
}

.notif-num {
    position: absolute;
    left: 20px;
    top: 6px;
    width: 16px;
    height: 16px;
    background-color: #44505c;
    border: 1px solid #ddd;
    border-radius: 50%;
    font-size: 11px;
    font-style: normal;
    line-height: 14px;
    text-align: center;
}

/* downloads flyout, sits over the page */
.dl-panel {
    position: absolute;
    left: 897px;
    top: 65px;
    width: 362px;
    height: 123px;
    background-color: #fff;
    border-radius: 8px;
    box-shadow: 0 1px 5px rgba(0, 0, 0, .45);
    font-family: "Open Sans", sans-serif;
}

.dl-head {
    display: flex;
    align-items: center;
    height: 36px;
    padding: 0 10px 4px 17px;
    border-bottom: 1px solid #e8e8e8;
}

.dl-title {
    margin-right: auto;
    font-size: 13px;
    font-weight: 600;
    color: #444;
}

.dl-tool {
    display: flex;
    justify-content: center;
    width: 32.500px;
}

.dl-row {
    display: flex;
    align-items: center;
    height: 49px;
    margin: 1px 5px 0;
    padding: 0 0 2px 13px;
    background-color: #f1f1f1;
}

.dl-info {
    width: 207px;
    margin-left: 11px;
    overflow: hidden;
    white-space: nowrap;
}

.dl-name {
    display: block;
    font-size: 11.500px;
    line-height: 16px;
    color: #444;
}

.dl-open {
    font-size: 9.500px;
    color: #0f6cbd;
    border-bottom: 1px solid #0f6cbd;
}

.dl-trash {
    margin-left: 66px;
}

.dl-more {
    display: block;
    margin: 11px 0 0 17px;
    font-size: 13px;
    color: #1b75bc;
}

.spot {
    position: absolute;
    left: 1145px;
    top: 98px;
    width: 52px;
    height: 52px;
    background-color: rgba(240, 170, 170, .55);
    border: 1px solid #b89090;
    border-radius: 50%;
}

.spot-square {
    position: absolute;
    left: 8px;
    top: 8px;
    width: 34px;
    height: 34px;
    background-color: rgba(235, 170, 170, .5);
}

.spot-yellow {
    position: absolute;
    left: 13px;
    top: 13px;
    width: 24px;
    height: 24px;
    background-color: #f4df5c;
    border-radius: 50%;
}

.spot-folder {
    position: absolute;
    left: 16px;
    top: 18px;
}

.spot-hand {
    position: absolute;
    left: 20px;
    top: 26px;
}

.tooltip {
    position: absolute;
    left: 1182px;
    top: 140px;
    width: 87px;
    height: 24px;
    padding-top: 4px;
    background-color: #fff;
    border: 1px solid #222;
    font-family: "Open Sans", sans-serif;
    font-size: 10.950px;
    line-height: 14px;
    text-align: center;
    color: #333;
}
```
